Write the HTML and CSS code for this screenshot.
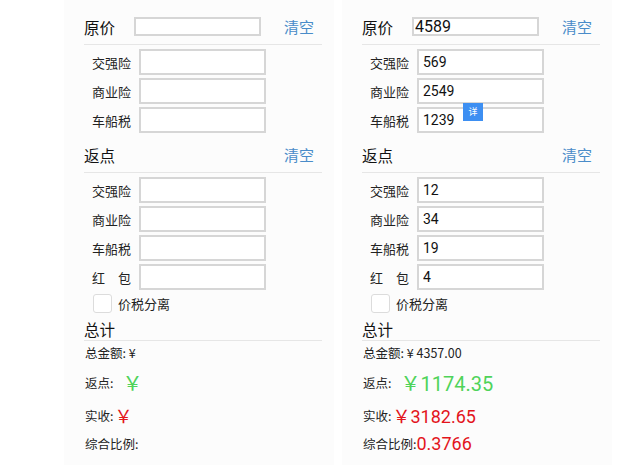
FILE: index.html
```html
<!DOCTYPE html>
<html lang="zh-CN">
<head>
    <meta charset="UTF-8">
    <meta name="viewport" content="width=device-width, initial-scale=1.0">
    <title>保费计算</title>
    <link rel="stylesheet" href="styles.css">
</head>
<body>
    <div class="page">
        <div class="panel">
            <div class="head">
                <span class="title">原价</span>
                <input class="main-input" type="text">
                <a class="clear">清空</a>
            </div>
            <div class="row"><label>交强险</label><input class="field" type="text"></div>
            <div class="row"><label>商业险</label><input class="field" type="text"></div>
            <div class="row"><label>车船税</label><input class="field" type="text"></div>

            <div class="head head-2">
                <span class="title">返点</span>
                <a class="clear">清空</a>
            </div>
            <div class="row"><label>交强险</label><input class="field" type="text"></div>
            <div class="row"><label>商业险</label><input class="field" type="text"></div>
            <div class="row"><label>车船税</label><input class="field" type="text"></div>
            <div class="row"><label>红&emsp;包</label><input class="field" type="text"></div>
            <div class="check-row"><input class="check" type="checkbox"><span>价税分离</span></div>

            <div class="head head-total"><span class="title">总计</span></div>
            <div class="sum sum-1">总金额: ¥</div>
            <div class="sum sum-2">返点:<span class="green">￥</span></div>
            <div class="sum sum-3">实收:<span class="red">￥</span></div>
            <div class="sum sum-4">综合比例:</div>
        </div>

        <div class="panel">
            <div class="head">
                <span class="title">原价</span>
                <input class="main-input" type="text" value="4589">
                <a class="clear">清空</a>
            </div>
            <div class="row"><label>交强险</label><input class="field" type="text" value="569"></div>
            <div class="row"><label>商业险</label><input class="field" type="text" value="2549"></div>
            <div class="row"><label>车船税</label><input class="field" type="text" value="1239"></div>
            <span class="badge">详</span>

            <div class="head head-2">
                <span class="title">返点</span>
                <a class="clear">清空</a>
            </div>
            <div class="row"><label>交强险</label><input class="field" type="text" value="12"></div>
            <div class="row"><label>商业险</label><input class="field" type="text" value="34"></div>
            <div class="row"><label>车船税</label><input class="field" type="text" value="19"></div>
            <div class="row"><label>红&emsp;包</label><input class="field" type="text" value="4"></div>
            <div class="check-row"><input class="check" type="checkbox"><span>价税分离</span></div>

            <div class="head head-total"><span class="title">总计</span></div>
            <div class="sum sum-1">总金额: ¥ 4357.00</div>
            <div class="sum sum-2">返点:<span class="green">￥1174.35</span></div>
            <div class="sum sum-3">实收:<span class="red">￥3182.65</span></div>
            <div class="sum sum-4">综合比例:<span class="red ratio">0.3766</span></div>
        </div>
    </div>
</body>
</html>
```

FILE: styles.css
```css
body {
    margin: 0;
    background: #fff;
    font-family: "Noto Sans CJK SC", "Noto Sans", sans-serif;
    color: #222;
}
.page {
    display: flex;
    gap: 8px;
    padding-left: 64px;
}
.panel {
    position: relative;
    width: 270px;
    height: 465px;
    padding-top: 9px;
    box-sizing: border-box;
    background: #fcfcfc;
}

/* section header: 原价 / 返点 / 总计 */
.head {
    display: flex;
    align-items: center;
    height: 36px;
    margin-left: 20px;
    width: 238px;
    border-bottom: 1px solid #e6e6e6;
    box-sizing: border-box;
}
.head-2 {
    margin-top: 4px;
}
.head-total {
    height: 24px;
    margin-top: 4px;
    align-items: flex-end;
}
.title {
    width: 50px;
    font-size: 15.5px;
    color: #111;
    line-height: 20px;
}
.head-total .title {
    line-height: 22px;
}
.main-input {
    width: 127px;
    height: 19px;
    box-sizing: border-box;
    border: 2px solid #d6d6d6;
    padding: 0 1px;
    font-family: Roboto, "Noto Sans", sans-serif;
    font-size: 16px;
    color: #111;
    background: #fff;
    outline: none;
}
.clear {
    margin-left: auto;
    margin-right: 8px;
    font-size: 15px;
    color: #4a8cc9;
}

/* input rows */
.row {
    display: flex;
    align-items: center;
    height: 26px;
    margin: 3px 0 0 28px;
}
.head + .row {
    margin-top: 4px;
}
.row label {
    width: 47px;
    font-size: 13px;
    color: #222;
}
.field {
    width: 127px;
    height: 26px;
    box-sizing: border-box;
    border: 2px solid #d6d6d6;
    padding: 0 4px;
    font-family: Roboto, "Noto Sans", sans-serif;
    font-size: 14px;
    color: #111;
    background: #fff;
    outline: none;
}

.check-row {
    display: flex;
    align-items: center;
    height: 19px;
    margin: 4px 0 0 29px;
    font-size: 13px;
}
.check {
    appearance: none;
    width: 19px;
    height: 19px;
    margin: 0 6px 0 0;
    border: 1px solid #dcdcdc;
    border-radius: 3px;
    background: #fff;
}

/* totals */
.sum {
    display: flex;
    align-items: center;
    margin-left: 21px;
    font-size: 12.5px;
    color: #222;
}
.sum-1 {
    height: 18px;
    margin-top: 2px;
}
.sum-2 {
    height: 32px;
    margin-top: 5px;
}
.sum-3 {
    height: 30px;
    margin-top: 2px;
}
.sum-4 {
    height: 26px;
    margin-top: 0;
}
.green,
.red {
    font-family: Roboto, "Noto Sans CJK SC", sans-serif;
    font-size: 20px;
}
.green {
    color: #4fd35a;
    margin-left: 9px;
}
.red {
    color: #e3141b;
    margin-left: 1px;
}
.sum-3 .red {
    font-size: 18px;
}
.ratio {
    margin-left: 0;
    font-size: 18px;
}

.badge {
    position: absolute;
    left: 121px;
    top: 103px;
    width: 20px;
    height: 18px;
    background: #3d8ff2;
    color: #fff;
    font-size: 9px;
    line-height: 18px;
    text-align: center;
}
```
